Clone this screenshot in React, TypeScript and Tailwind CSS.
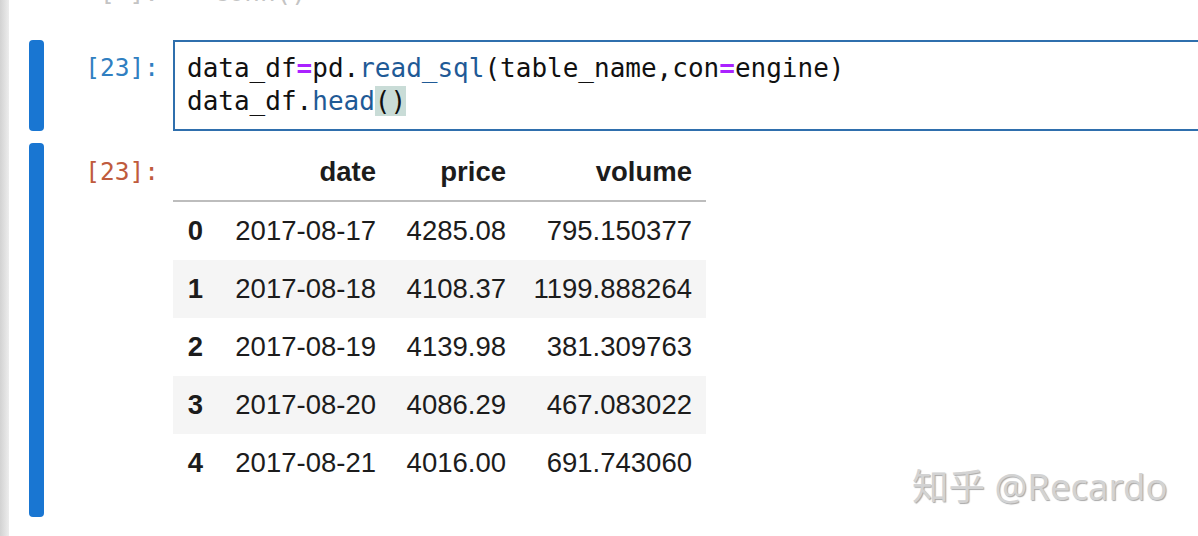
import React from "react";

const rows = [
  ["0", "2017-08-17", "4285.08", "795.150377"],
  ["1", "2017-08-18", "4108.37", "1199.888264"],
  ["2", "2017-08-19", "4139.98", "381.309763"],
  ["3", "2017-08-20", "4086.29", "467.083022"],
  ["4", "2017-08-21", "4016.00", "691.743060"],
];

const mono = { fontFamily: '"DejaVu Sans Mono", "Liberation Mono", monospace' };

function Prompt({ color, children }: { color: string; children: React.ReactNode }) {
  return (
    <div
      className={`w-[129px] shrink-0 pr-[14px] text-right text-[24.5px] leading-[33px] ${color}`}
      style={mono}
    >
      {children}
    </div>
  );
}

export default function App() {
  return (
    <div className="relative flex h-[536px] w-[1198px] overflow-hidden bg-white">
      {/* notebook side shade */}
      <div className="w-[9px] shrink-0 bg-gradient-to-r from-[#d2d2d2] to-[#ededed]" />

      <div className="flex min-w-0 flex-1 flex-col pl-[20px]">
        {/* tail of previous cell */}
        <div className="flex h-[28px] overflow-hidden text-[#c4c4c4]">
          <div className="w-[15px] shrink-0" />
          <div className="-mt-[24px] flex">
            <Prompt color="text-[#c4c4c4]">[ ]:</Prompt>
            <div className="pl-[40px] text-[26px] leading-[33px]" style={mono}>
              conn()
            </div>
          </div>
        </div>

        {/* input cell */}
        <div className="mt-[12px] flex h-[91px]">
          <div className="w-[15px] shrink-0 rounded-[4px] bg-[#1976d2]" />
          <Prompt color="text-[#307fc1]">
            <div className="pt-[11px]">[23]:</div>
          </Prompt>
          <div
            className="h-full flex-1 border-2 border-r-0 border-[#2f6fad] bg-white pl-[12px] pt-[10px] text-[26px] leading-[33px] text-[#111]"
            style={mono}
          >
            <div className="whitespace-pre">
              data_df<span className="font-bold text-[#aa22ff]">=</span>pd.
              <span className="text-[#1f5a96]">read_sql</span>(table_name,con
              <span className="font-bold text-[#aa22ff]">=</span>engine)
            </div>
            <div className="whitespace-pre">
              data_df.<span className="text-[#1f5a96]">head</span>
              <span className="bg-[#c9dcd7]">()</span>
            </div>
          </div>
        </div>

        {/* output cell */}
        <div className="mt-[12px] flex h-[374px]">
          <div className="w-[15px] shrink-0 rounded-[4px] bg-[#1976d2]" />
          <Prompt color="text-[#bf5b3d]">
            <div className="pt-[12px]">[23]:</div>
          </Prompt>
          <div
            className="text-[27.5px] text-[#1c1c1c]"
            style={{ fontFamily: '"Liberation Sans", Arial, sans-serif' }}
          >
            <div className="grid h-[59px] grid-cols-[44px_173px_130px_186px] items-center border-b-2 border-[#bdbdbd] font-bold">
              <div />
              <div className="pr-[14px] text-right">date</div>
              <div className="pr-[14px] text-right">price</div>
              <div className="pr-[14px] text-right">volume</div>
            </div>
            {rows.map((r, i) => (
              <div
                key={r[0]}
                className={`grid h-[58px] grid-cols-[44px_173px_130px_186px] items-center ${
                  i % 2 === 1 ? "bg-[#f5f5f5]" : "bg-white"
                }`}
              >
                <div className="pr-[14px] text-right font-bold">{r[0]}</div>
                <div className="pr-[14px] text-right">{r[1]}</div>
                <div className="pr-[14px] text-right">{r[2]}</div>
                <div className="pr-[14px] text-right">{r[3]}</div>
              </div>
            ))}
          </div>
        </div>
      </div>

      {/* watermark */}
      <div
        className="absolute left-[912px] top-[464px] text-[36.5px] leading-[44px] text-[#d3d3d3] [text-shadow:1px_1px_1px_#a8a8a8]"
        style={{ fontFamily: '"Noto Sans", "Noto Sans CJK SC", sans-serif' }}
      >
        知乎 @Recardo
      </div>
    </div>
  );
}
